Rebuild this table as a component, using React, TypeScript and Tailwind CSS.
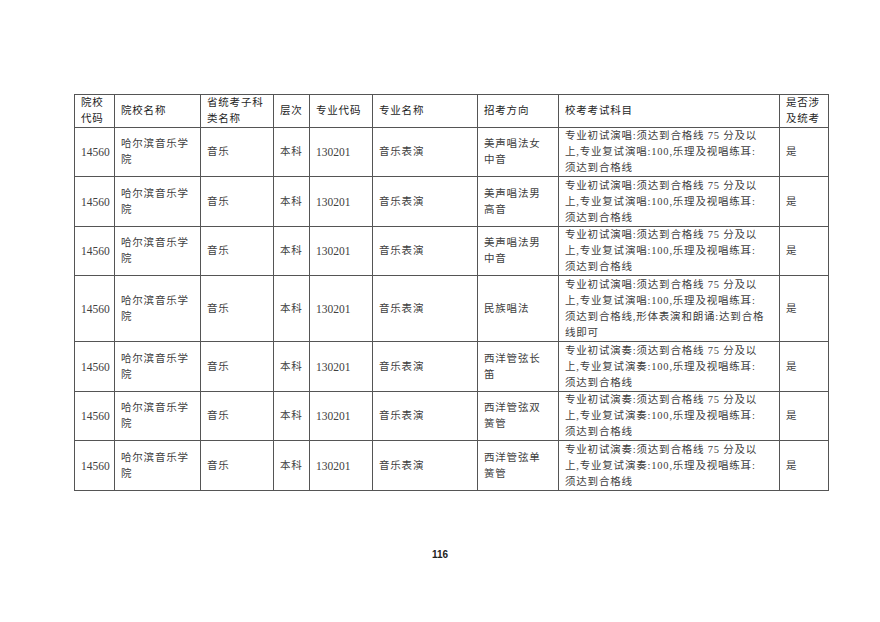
const head = [
  ["院校", "代码"],
  ["院校名称"],
  ["省统考子科", "类名称"],
  ["层次"],
  ["专业代码"],
  ["专业名称"],
  ["招考方向"],
  ["校考考试科目"],
  ["是否涉", "及统考"],
];

const widths = ["w-[40px]", "w-[86px]", "w-[73px]", "w-[36px]", "w-[63px]", "w-[105px]", "w-[81px]", "w-[221px]", "w-[49px]"];

const sing = [
  "专业初试演唱:须达到合格线 75 分及以",
  "上,专业复试演唱:100,乐理及视唱练耳:",
  "须达到合格线",
];
const play = [
  "专业初试演奏:须达到合格线 75 分及以",
  "上,专业复试演奏:100,乐理及视唱练耳:",
  "须达到合格线",
];

const rows: { dir: string[]; exam: string[]; h: string }[] = [
  { dir: ["美声唱法女", "中音"], exam: sing, h: "h-[49px]" },
  { dir: ["美声唱法男", "高音"], exam: sing, h: "h-[50px]" },
  { dir: ["美声唱法男", "中音"], exam: sing, h: "h-[49px]" },
  {
    dir: ["民族唱法"],
    exam: [
      "专业初试演唱:须达到合格线 75 分及以",
      "上,专业复试演唱:100,乐理及视唱练耳:",
      "须达到合格线,形体表演和朗诵:达到合格",
      "线即可",
    ],
    h: "h-[66px]",
  },
  { dir: ["西洋管弦长", "笛"], exam: play, h: "h-[50px]" },
  { dir: ["西洋管弦双", "簧管"], exam: play, h: "h-[49px]" },
  { dir: ["西洋管弦单", "簧管"], exam: play, h: "h-[50px]" },
];

function Lines({ lines }: { lines: string[] }) {
  return (
    <>
      {lines.map((l, i) => (
        <div key={i} className="whitespace-nowrap">
          {l}
        </div>
      ))}
    </>
  );
}

const cell = "border border-[#555] align-middle pl-[6px] pr-0 py-0";

export default function App() {
  return (
    <div
      className="w-[880px] h-[622px] bg-white pt-[94px] pl-[74px]"
      style={{ fontFamily: '"Liberation Serif", "Noto Sans CJK SC", serif' }}
    >
      <table className="table-fixed border-collapse w-[755px] text-[10.5px] leading-[16px] tracking-[0.8px] text-[#404040]">
        <colgroup>
          {widths.map((w, i) => (
            <col key={i} className={w} />
          ))}
        </colgroup>
        <thead>
          <tr className="h-[33px] text-[#1e1e1e]">
            {head.map((h, i) => (
              <th key={i} className={`${cell} text-left font-normal`}>
                <Lines lines={h} />
              </th>
            ))}
          </tr>
        </thead>
        <tbody>
          {rows.map((r, i) => (
            <tr key={i} className={r.h}>
              <td className={`${cell} text-[11.5px] tracking-normal`}>14560</td>
              <td className={cell}>
                <Lines lines={["哈尔滨音乐学", "院"]} />
              </td>
              <td className={cell}>音乐</td>
              <td className={cell}>本科</td>
              <td className={`${cell} text-[11.5px] tracking-normal`}>130201</td>
              <td className={cell}>音乐表演</td>
              <td className={cell}>
                <Lines lines={r.dir} />
              </td>
              <td className={cell}>
                <Lines lines={r.exam} />
              </td>
              <td className={cell}>是</td>
            </tr>
          ))}
        </tbody>
      </table>
      <div
        className="mt-[56px] w-[732px] text-center text-[10px] font-bold text-[#222]"
        style={{ fontFamily: '"Liberation Sans", sans-serif' }}
      >
        116
      </div>
    </div>
  );
}
